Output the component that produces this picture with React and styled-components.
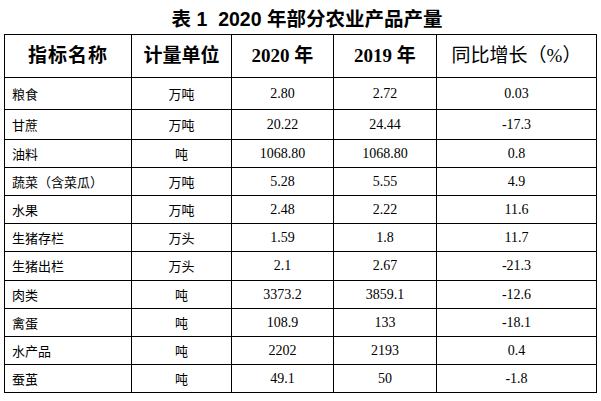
import React from "react";
import styled, { createGlobalStyle } from "styled-components";

const Global = createGlobalStyle`
  html, body { margin: 0; padding: 0; background: #fff; }
  body { width: 601px; height: 401px; overflow: hidden; }
`;

const Page = styled.div`
  padding: 0 0 0 4px;
  display: flex;
  flex-direction: column;
`;

const Title = styled.h1`
  margin: 0;
  height: 34px;
  box-sizing: border-box;
  padding: 7px 0 0 14px;
  width: 592px;
  text-align: center;
  font-family: "Liberation Sans", "Noto Sans CJK SC", sans-serif;
  font-weight: bold;
  font-size: 19.5px;
  line-height: 25px;
  color: #000;
  white-space: pre;
`;

const Table = styled.table`
  border-collapse: collapse;
  table-layout: fixed;
  width: 592px;
  color: #000;
`;

const HeadRow = styled.tr`
  height: 43px;
`;

const Row = styled.tr`
  height: ${(p) => p.$h}px;
`;

const Th = styled.th`
  border: 1px solid #000;
  padding: 0;
  text-align: center;
  font-family: "Liberation Serif", "Noto Sans CJK SC", serif;
  font-weight: ${(p) => (p.$light ? "normal" : "bold")};
  font-size: 19px;
  line-height: 22px;
  letter-spacing: ${(p) => (p.$spaced ? "1px" : "0")};
`;

const Td = styled.td`
  border: 1px solid #000;
  padding: ${(p) => (p.$left ? "0 0 0 7px" : "0")};
  text-align: ${(p) => (p.$left ? "left" : "center")};
  font-family: ${(p) =>
    p.$num
      ? `"Liberation Serif", "Noto Sans CJK SC", serif`
      : `"Noto Sans CJK SC", sans-serif`};
  font-size: ${(p) => (p.$num ? "14px" : "13px")};
  line-height: 16px;
  white-space: nowrap;
`;

const rows = [
  ["粮食", "万吨", "2.80", "2.72", "0.03", 32],
  ["甘蔗", "万吨", "20.22", "24.44", "-17.3", 30],
  ["油料", "吨", "1068.80", "1068.80", "0.8", 28],
  ["蔬菜（含菜瓜）", "万吨", "5.28", "5.55", "4.9", 28],
  ["水果", "万吨", "2.48", "2.22", "11.6", 28],
  ["生猪存栏", "万头", "1.59", "1.8", "11.7", 28],
  ["生猪出栏", "万头", "2.1", "2.67", "-21.3", 29],
  ["肉类", "吨", "3373.2", "3859.1", "-12.6", 28],
  ["禽蛋", "吨", "108.9", "133", "-18.1", 28],
  ["水产品", "吨", "2202", "2193", "0.4", 28],
  ["蚕茧", "吨", "49.1", "50", "-1.8", 28],
];

export default function App() {
  return (
    <>
      <Global />
      <Page>
        <Title>{"表 1  2020 年部分农业产品产量"}</Title>
        <Table>
          <colgroup>
            <col style={{ width: 127 }} />
            <col style={{ width: 100 }} />
            <col style={{ width: 102 }} />
            <col style={{ width: 103 }} />
            <col style={{ width: 160 }} />
          </colgroup>
          <thead>
            <HeadRow>
              <Th $spaced>指标名称</Th>
              <Th>计量单位</Th>
              <Th>2020 年</Th>
              <Th>2019 年</Th>
              <Th $light>同比增长（%）</Th>
            </HeadRow>
          </thead>
          <tbody>
            {rows.map(([name, unit, a, b, c, h]) => (
              <Row key={name} $h={h}>
                <Td $left>{name}</Td>
                <Td>{unit}</Td>
                <Td $num>{a}</Td>
                <Td $num>{b}</Td>
                <Td $num>{c}</Td>
              </Row>
            ))}
          </tbody>
        </Table>
      </Page>
    </>
  );
}
